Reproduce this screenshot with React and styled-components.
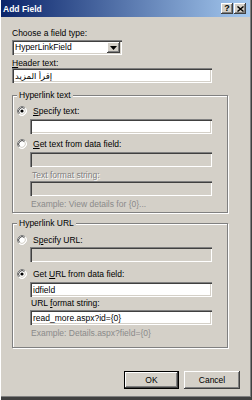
import React from "react";
import styled, { createGlobalStyle } from "styled-components";

const GlobalStyle = createGlobalStyle`
  html, body {
    margin: 0;
    padding: 0;
    background: #d4d0c8;
  }
`;

const FONT = `"Liberation Sans", "DejaVu Sans", Arial, sans-serif`;

const sunken = `
  box-shadow: inset 1px 1px #808080, inset 2px 2px #404040,
    inset -1px -1px #ffffff, inset -2px -2px #d4d0c8;
`;

const raised = `
  box-shadow: inset -1px -1px #404040, inset 1px 1px #ffffff,
    inset -2px -2px #808080;
`;

const Window = styled.div`
  width: 252px;
  height: 400px;
  box-sizing: border-box;
  background: #d4d0c8;
  display: flex;
  flex-direction: column;
  font-family: ${FONT};
  font-size: 8.5px;
  color: #000;
  box-shadow: inset 1px 0 #ffffff, inset -1px -3px #404040,
    inset -2px -4px #808080;
`;

const TitleBar = styled.div`
  height: 17px;
  margin: 0 2px 0 1px;
  padding: 0 4px 0 2px;
  display: flex;
  align-items: center;
  justify-content: space-between;
  background: linear-gradient(to right, #0a246a, #a6caf0);
`;

const Title = styled.span`
  color: #fff;
  font-weight: bold;
  font-size: 8.5px;
`;

const CaptionButtons = styled.div`
  display: flex;
  gap: 1px;
`;

const CaptionButton = styled.div`
  width: 12px;
  height: 11px;
  background: #d4d0c8;
  ${raised}
  display: flex;
  align-items: center;
  justify-content: center;
  font-weight: bold;
  font-size: 9px;
  line-height: 1;
  color: #000;
`;

const Body = styled.div`
  flex: 1;
  display: flex;
  flex-direction: column;
  padding: 11px 0 0 12px;
`;

const Label = styled.div`
  line-height: 10px;
  height: 10px;
  margin-top: ${p => p.$mt || 0}px;
  margin-left: ${p => p.$ml || 0}px;
  color: ${p => (p.$disabled ? "#808080" : "#000")};
  text-shadow: ${p => (p.$disabled ? "1px 1px #ffffff" : "none")};
  white-space: nowrap;
`;

const Hint = styled(Label)`
  color: #8a8a8a;
  text-shadow: none;
`;

const Select = styled.div`
  width: 110px;
  height: 15px;
  margin-top: ${p => p.$mt || 0}px;
  box-sizing: border-box;
  background: #fff;
  ${sunken}
  display: flex;
  align-items: center;
  padding: 2px 2px 2px 3px;
`;

const SelectText = styled.span`
  flex: 1;
  line-height: 11px;
`;

const ArrowButton = styled.div`
  width: 13px;
  height: 11px;
  background: #d4d0c8;
  ${raised}
  display: flex;
  align-items: center;
  justify-content: center;
`;

const TextBox = styled.input`
  display: block;
  width: ${p => p.$w}px;
  height: 15px;
  margin: ${p => p.$mt || 0}px 0 0 ${p => p.$ml || 0}px;
  box-sizing: border-box;
  border: none;
  outline: none;
  padding: 0 3px;
  font-family: ${FONT};
  font-size: 8.5px;
  color: #000;
  background: ${p => (p.disabled ? "#d4d0c8" : "#ffffff")};
  ${sunken}
`;

const Group = styled.fieldset`
  width: 216px;
  box-sizing: border-box;
  margin: ${p => p.$mt || 0}px 0 0 0;
  padding: 0 0 ${p => p.$pb || 0}px 0;
  border: 1px solid #808080;
  box-shadow: inset 1px 1px #ffffff, 1px 1px #ffffff;
  display: flex;
  flex-direction: column;
`;

const Legend = styled.legend`
  margin-left: 4px;
  padding: 0 2px;
  line-height: 10px;
  background: #d4d0c8;
`;

const RadioRow = styled.div`
  display: flex;
  align-items: center;
  gap: 6px;
  height: 10px;
  margin: ${p => p.$mt || 0}px 0 0 4px;
  line-height: 10px;
`;

const Footer = styled.div`
  display: flex;
  justify-content: flex-end;
  gap: 5px;
  padding-right: 12px;
  margin-top: 23px;
`;

const Button = styled.div`
  width: ${p => p.$w}px;
  height: 18px;
  box-sizing: border-box;
  background: #d4d0c8;
  display: flex;
  align-items: center;
  justify-content: center;
  ${p =>
    p.$default
      ? `box-shadow: inset 0 0 0 1px #000, inset -2px -2px #404040, inset 2px 2px #ffffff, inset -3px -3px #808080;`
      : `box-shadow: inset -1px -1px #404040, inset 1px 1px #ffffff, inset -2px -2px #808080;`}
`;

const Radio = ({ checked }) => (
  <svg width="10" height="10" viewBox="0 0 10 10">
    <circle cx="5" cy="5" r="4.5" fill="#fff" />
    <path d="M1.82 8.18 A4.5 4.5 0 0 1 8.18 1.82" stroke="#808080" fill="none" />
    <path d="M8.18 1.82 A4.5 4.5 0 0 1 1.82 8.18" stroke="#ffffff" fill="none" />
    <path d="M2.53 7.47 A3.5 3.5 0 0 1 7.47 2.53" stroke="#404040" fill="none" />
    <path d="M7.47 2.53 A3.5 3.5 0 0 1 2.53 7.47" stroke="#d4d0c8" fill="none" />
    {checked && <circle cx="5" cy="5" r="1.6" fill="#000" />}
  </svg>
);

export default function App() {
  return (
    <>
      <GlobalStyle />
      <Window>
        <TitleBar>
          <Title>Add Field</Title>
          <CaptionButtons>
            <CaptionButton>?</CaptionButton>
            <CaptionButton>
              <svg width="7" height="6" viewBox="0 0 7 6">
                <path d="M0.5 0.5 L6.5 5.5 M6.5 0.5 L0.5 5.5" stroke="#000" strokeWidth="1.4" />
              </svg>
            </CaptionButton>
          </CaptionButtons>
        </TitleBar>
        <Body>
          <Label>Choose a field type:</Label>
          <Select $mt={2}>
            <SelectText>HyperLinkField</SelectText>
            <ArrowButton>
              <svg width="7" height="4" viewBox="0 0 7 4">
                <path d="M0 0 H7 L3.5 4 Z" fill="#000" />
              </svg>
            </ArrowButton>
          </Select>
          <Label $mt={3}>
            <u>H</u>eader text:
          </Label>
          <TextBox $w={200} defaultValue="إقرأ المزيد" readOnly />

          <Group $mt={7} $pb={3}>
            <Legend>Hyperlink text</Legend>
            <RadioRow $mt={6}>
              <Radio checked />
              <span>
                <u>S</u>pecify text:
              </span>
            </RadioRow>
            <TextBox $w={182} $ml={17} $mt={3} readOnly />
            <RadioRow $mt={5}>
              <Radio />
              <span>
                <u>G</u>et text from data field:
              </span>
            </RadioRow>
            <TextBox $w={182} $ml={17} $mt={3} disabled />
            <Label $mt={3} $ml={19} $disabled>
              Text format string:
            </Label>
            <TextBox $w={182} $ml={17} $mt={1} disabled />
            <Hint $mt={3} $ml={18}>
              Example: View details for {"{0}"}...
            </Hint>
          </Group>

          <Group $mt={5} $pb={9}>
            <Legend>Hyperlink URL</Legend>
            <RadioRow $mt={7}>
              <Radio />
              <span>
                S<u>p</u>ecify URL:
              </span>
            </RadioRow>
            <TextBox $w={182} $ml={17} $mt={2} disabled />
            <RadioRow $mt={7}>
              <Radio checked />
              <span>
                Get <u>U</u>RL from data field:
              </span>
            </RadioRow>
            <TextBox $w={182} $ml={17} $mt={3} defaultValue="idfield" readOnly />
            <Label $mt={1} $ml={18}>
              URL <u>f</u>ormat string:
            </Label>
            <TextBox $w={182} $ml={17} $mt={2} defaultValue="read_more.aspx?id={0}" readOnly />
            <Hint $mt={3} $ml={18}>
              Example: Details.aspx?field={"{0}"}
            </Hint>
          </Group>

          <Footer>
            <Button $w={55} $default>
              OK
            </Button>
            <Button $w={56}>Cancel</Button>
          </Footer>
        </Body>
      </Window>
    </>
  );
}
